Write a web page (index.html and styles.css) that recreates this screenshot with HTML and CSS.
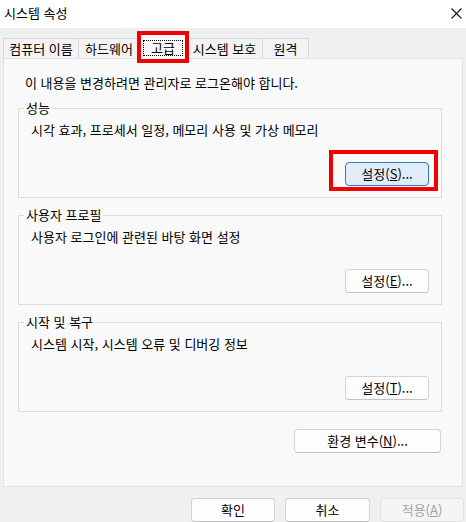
FILE: index.html
```html
<!DOCTYPE html>
<html lang="ko">
<head>
<meta charset="utf-8">
<title>시스템 속성</title>
<link rel="stylesheet" href="styles.css">
</head>
<body>
<div class="window">
  <div class="titlebar">
    <span class="title">시스템 속성</span>
    <svg class="close" width="11" height="11" viewBox="0 0 11 11"><path d="M0.5 0.5 L10.5 10.5 M10.5 0.5 L0.5 10.5" stroke="#1a1a1a" stroke-width="1.1" fill="none"/></svg>
  </div>
  <div class="tabs">
    <div class="tab tab-name">컴퓨터 이름</div>
    <div class="tab tab-hw">하드웨어</div>
    <div class="tab tab-active marked"><span class="focus">고급</span></div>
    <div class="tab tab-protect">시스템 보호</div>
    <div class="tab tab-remote">원격</div>
  </div>
  <div class="panel">
    <p class="note">이 내용을 변경하려면 관리자로 로그온해야 합니다.</p>
    <fieldset class="group">
      <legend>성능</legend>
      <p class="desc">시각 효과, 프로세서 일정, 메모리 사용 및 가상 메모리</p>
      <div class="row"><button class="btn btn-focus marked-btn">설정(<u>S</u>)...</button></div>
    </fieldset>
    <fieldset class="group">
      <legend>사용자 프로필</legend>
      <p class="desc">사용자 로그인에 관련된 바탕 화면 설정</p>
      <div class="row"><button class="btn">설정(<u>E</u>)...</button></div>
    </fieldset>
    <fieldset class="group">
      <legend>시작 및 복구</legend>
      <p class="desc">시스템 시작, 시스템 오류 및 디버깅 정보</p>
      <div class="row"><button class="btn">설정(<u>T</u>)...</button></div>
    </fieldset>
    <div class="row env-row"><button class="btn btn-wide">환경 변수(<u>N</u>)...</button></div>
  </div>
  <div class="footer">
    <button class="btn">확인</button>
    <button class="btn btn-cancel">취소</button>
    <button class="btn btn-disabled">적용(<u>A</u>)</button>
  </div>
</div>
</body>
</html>
```
FILE: styles.css
```css
* { box-sizing: border-box; }
html, body {
  margin: 0;
  padding: 0;
}
body {
  width: 466px;
  height: 522px;
  overflow: hidden;
  background: #f0f0f0;
  font-family: "Noto Sans CJK KR", "Noto Sans", sans-serif;
  font-size: 13px;
  line-height: 16px;
  color: #000;
}
.window {
  display: flex;
  flex-direction: column;
  height: 522px;
}
.titlebar {
  height: 28px;
  background: #fff;
  display: flex;
  align-items: center;
  justify-content: space-between;
  padding: 0 4px 2px 4px;
}
.close { display: block; }

.tabs {
  display: flex;
  align-items: flex-end;
  margin-top: 10px;
  padding-left: 3px;
  height: 20px;
  position: relative;
  z-index: 2;
}
.tab {
  height: 20px;
  border: 1px solid #dadada;
  border-bottom: none;
  background: #f3f3f3;
  display: flex;
  align-items: center;
  justify-content: center;
  white-space: nowrap;
}
.tab-name { width: 76px; }
.tab-hw { width: 62px; margin-left: -1px; }
.tab-active {
  width: 46px;
  height: 25px;
  margin-bottom: -1px;
  background: #f9f9f9;
  padding: 5px 2px 3px 2px;
  position: relative;
}
.tab-protect { width: 77px; }
.tab-remote { width: 47px; margin-left: -1px; }
.focus {
  flex: 1;
  align-self: stretch;
  border: 1px dotted #000;
  display: flex;
  align-items: center;
  justify-content: center;
}
.marked::after {
  content: "";
  position: absolute;
  left: -4px;
  right: -4px;
  top: -4px;
  bottom: -4px;
  border: 4px solid #f00000;
}

.panel {
  margin-left: 3px;
  width: 460px;
  height: 429px;
  background: #f9f9f9;
  border: 1px solid #e2e2e2;
  padding-top: 16px;
  position: relative;
  z-index: 1;
}
.note {
  margin: 0 0 0 21px;
}
.group {
  margin: 9px 20px 0 14px;
  padding: 0 12px 11px 12px;
  border: 1px solid #dcdcdc;
  min-width: 0;
}
.group legend {
  padding: 0 2px;
  margin-left: -7px;
}
.desc {
  margin: 6px 0 0 0;
}
.row {
  display: flex;
  justify-content: flex-end;
  margin-top: 24px;
}
.btn {
  width: 84px;
  height: 24px;
  padding: 0;
  font: inherit;
  color: #000;
  background: #fdfdfd;
  border: 1px solid #d3d3d3;
  border-bottom-color: #c2c2c2;
  border-radius: 4px;
  display: flex;
  align-items: center;
  justify-content: center;
  white-space: nowrap;
}
.btn u { text-underline-offset: 1px; }
.btn-focus {
  background: #e0edf9;
  border: 1px solid #2b7bd0;
  position: relative;
}
.marked-btn::after {
  content: "";
  position: absolute;
  left: -17px;
  right: -10px;
  top: -13px;
  bottom: -6px;
  border: 4px solid #f00000;
}
.env-row {
  margin: 17px 21px 0 0;
}
.btn-wide { width: 147px; }

.footer {
  display: flex;
  justify-content: flex-end;
  gap: 10px;
  margin-top: 11px;
  padding-right: 2px;
}
.btn-cancel { width: 85px; }
.btn-disabled {
  color: #a2a2a2;
  background: #f5f5f5;
  border-color: #e0e0e0;
}
```
